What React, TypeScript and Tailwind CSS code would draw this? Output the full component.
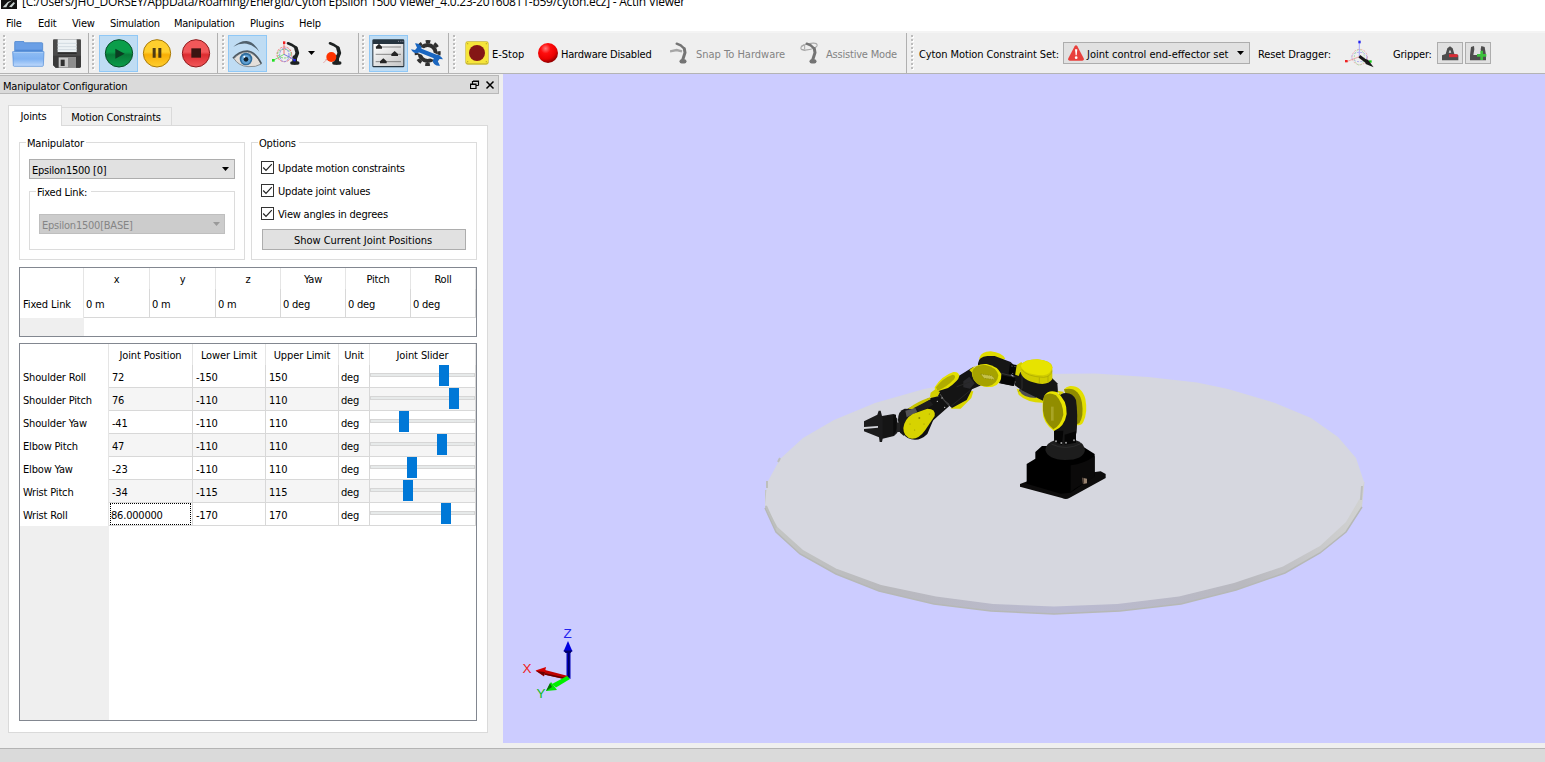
import type { ReactNode } from "react";

const JOINTS = [
  { name: "Shoulder Roll", pos: "72", lo: "-150", hi: "150", x: 69 },
  { name: "Shoulder Pitch", pos: "76", lo: "-110", hi: "110", x: 79 },
  { name: "Shoulder Yaw", pos: "-41", lo: "-110", hi: "110", x: 29 },
  { name: "Elbow Pitch", pos: "47", lo: "-110", hi: "110", x: 67 },
  { name: "Elbow Yaw", pos: "-23", lo: "-110", hi: "110", x: 37 },
  { name: "Wrist Pitch", pos: "-34", lo: "-115", hi: "115", x: 33 },
  { name: "Wrist Roll", pos: "86.000000", lo: "-170", hi: "170", x: 71 },
];

function Grip() {
  return (
    <svg className="h-9 w-[3px] shrink-0" viewBox="0 0 3 36">
      {[0, 1, 2, 3, 4, 5, 6, 7, 8].map((i) => (
        <g key={i}>
          <rect x="1" y={i * 4 + 1} width="2" height="2" fill="#fff" />
          <rect x="0" y={i * 4} width="2" height="2" fill="#bcbcbc" />
        </g>
      ))}
    </svg>
  );
}

function Sep() {
  return <div className="h-10 w-px shrink-0 bg-[#b0b0b0]" />;
}

function ToolButton({ active, children }: { active?: boolean; children: ReactNode }) {
  return (
    <button
      className={
        active
          ? "flex h-[37px] w-[39px] shrink-0 items-center justify-center border border-[#90c8f6] bg-[#bfdcf3]"
          : "flex h-[37px] w-[39px] shrink-0 items-center justify-center pr-[2px]"
      }
    >
      {children}
    </button>
  );
}

function FolderIcon() {
  return (
    <svg className="block h-[26px] w-[33px] shrink-0" viewBox="0 0 99 78">
      <defs>
        <linearGradient id="fold" x1="0" y1="0" x2="0" y2="1">
          <stop offset="0" stopColor="#8fbdf3" />
          <stop offset="0.5" stopColor="#7fb2f2" />
          <stop offset="1" stopColor="#c0dafc" />
        </linearGradient>
      </defs>
      <path d="M8 34V4q0-3 3-3h22q3 0 4 4h52q3 0 3 3v26z" fill="#6a9fe6" stroke="#3f7cc9" strokeWidth="2" />
      <path d="M10 26h80v8H10z" fill="#4f88d4" />
      <path d="M2 32h94l-2 41q0 3-3 3H7q-3 0-3-3z" fill="url(#fold)" stroke="#4a86d6" strokeWidth="2" />
      <path d="M4 34h90" stroke="#c3dcfa" strokeWidth="2" />
    </svg>
  );
}

function SaveIcon() {
  return (
    <svg className="block h-[29px] w-[28px] shrink-0" viewBox="0 0 84 87">
      <path d="M3 1h78q3 0 3 3v78q0 4-4 4H8l-8-8V4q0-3 3-3z" fill="#4a4a4a" />
      <path d="M0 50h84v32q0 4-4 4H8l-8-8z" fill="#3a3a3a" />
      <path d="M14 1h57v39H14z" fill="#edf2f5" />
      <path d="M14 13h57M14 23h57M14 32h57" stroke="#d2dbe1" strokeWidth="3" />
      <path d="M14 40h57v4H14z" fill="#222" />
      <path d="M17 55h52v31H17z" fill="#c9c9c9" />
      <path d="M45 55h24v31H45z" fill="#8d8d8d" />
      <path d="M23 62h12v19H23z" fill="#303030" />
    </svg>
  );
}

function RoundIcon({ kind }: { kind: "play" | "pause" | "stop" }) {
  const c = {
    play: ["#0b9e4a", "#087a38", "#064e24"],
    pause: ["#ffcf2e", "#f8ae05", "#a97a08"],
    stop: ["#f2585a", "#dc2c30", "#8e1a1c"],
  }[kind];
  return (
    <svg className="block size-[30px] shrink-0" viewBox="0 0 90 90">
      <defs>
        <linearGradient id={kind} x1="0" y1="0" x2="0" y2="1">
          <stop offset="0.45" stopColor={c[0]} />
          <stop offset="0.55" stopColor={c[1]} />
          <stop offset="1" stopColor={c[0]} />
        </linearGradient>
      </defs>
      <circle cx="45" cy="46" r="41" fill={"url(#" + kind + ")"} stroke={c[2]} strokeWidth="3" />
      {kind === "play" && <path d="M34 32v30l28-15z" fill="#0b3d22" />}
      {kind === "pause" && <path d="M32 30h9v29h-9zM49 30h9v29h-9z" fill="#4d3a13" />}
      {kind === "stop" && <path d="M31 31h29v28H31z" fill="#3c1412" />}
    </svg>
  );
}

function EyeIcon() {
  return (
    <svg className="mt-px block h-[28px] w-[31px] shrink-0" viewBox="0 0 93 84">
      <path d="M4 20Q24 2 44 3q20 1 38 32Q64 14 44 11 22 9 4 20z" fill="#50606c" />
      <path d="M6 56Q22 36 46 36q24 4 42 36-16 10-40 8Q20 78 6 56z" fill="#e4dfda" stroke="#8a9094" strokeWidth="3" />
      <path d="M3 55Q20 34 46 33q24 2 42 38" fill="none" stroke="#4e5860" strokeWidth="5" />
      <circle cx="42" cy="57" r="19" fill="#2f6c9c" />
      <circle cx="42" cy="58" r="14" fill="#5fa0d3" />
      <circle cx="42" cy="58" r="7" fill="#10202c" />
      <circle cx="37" cy="50" r="3" fill="#fff" />
    </svg>
  );
}

function Arm({ color }: { color: string }) {
  return (
    <g fill="none" stroke={color} strokeLinecap="round" strokeLinejoin="round">
      <path d="M48 7L60 12L72 20" strokeWidth="8" />
      <path d="M72 22L76 36L68 56" strokeWidth="11" />
      <path d="M60 66h17" strokeWidth="11" />
      <path d="M68 50v14" strokeWidth="14" />
    </g>
  );
}

function DraggerIcon() {
  return (
    <svg className="block h-[26px] w-[28px] shrink-0" viewBox="0 0 84 78">
      <Arm color="#1e2222" />
      <g fill="none" strokeWidth="3">
        <circle cx="37" cy="40" r="22" stroke="#ef7777" strokeDasharray="7 3" />
        <ellipse cx="37" cy="38" rx="20" ry="13" stroke="#79d779" strokeDasharray="7 3" />
        <ellipse cx="37" cy="42" rx="14" ry="20" stroke="#8888ee" strokeDasharray="7 3" />
        <path d="M36 40V5" stroke="#e77" />
        <path d="M36 40L4 58" stroke="#7d7" />
        <path d="M36 40l33 17" stroke="#77d" />
      </g>
      <path d="M33 1h7v8h-7z" fill="#f02020" />
      <path d="M0 54h8v8H0z" fill="#20e020" />
      <path d="M64 54h7v7h-7z" fill="#2020f0" />
    </svg>
  );
}

function BallArmIcon() {
  return (
    <svg className="block h-[26px] w-[28px] shrink-0" viewBox="0 0 84 78">
      <path d="M28 66l14-14M34 56h36" stroke="#d88" strokeWidth="2" />
      <Arm color="#1e2222" />
      <circle cx="52" cy="48" r="15" fill="#ff3300" />
    </svg>
  );
}

function SlidersIcon() {
  return (
    <svg className="block h-[29px] w-[33px] shrink-0" viewBox="0 0 99 87">
      <defs>
        <linearGradient id="sl" x1="0" y1="0" x2="1" y2="1">
          <stop offset="0" stopColor="#fff" />
          <stop offset="1" stopColor="#c6c6c6" />
        </linearGradient>
      </defs>
      <rect x="1" y="1" width="96" height="84" rx="4" fill="#26343f" />
      <path d="M4 15h90v66H4z" fill="url(#sl)" />
      <path d="M78 7h3M85 7h3M91 7h3" stroke="#889" strokeWidth="3" />
      <path d="M11 24h76M11 46h76M11 68h76" stroke="#555" strokeWidth="2" />
      <path d="M12 29v-6l9-9 9 9v6zM58 51v-6l10-9 10 9v6zM24 73v-6l10-9 10 9v6z" fill="#252525" />
    </svg>
  );
}

function GearIcon() {
  return (
    <svg className="block h-[27px] w-[33px] shrink-0" viewBox="0 0 99 81">
      <circle cx="50" cy="39" r="24" fill="none" stroke="#303030" strokeWidth="12" />
      <circle cx="50" cy="39" r="34" fill="none" stroke="#303030" strokeWidth="10" strokeDasharray="14 12.7" strokeDashoffset="7" />
      <path d="M20 28L80 54" stroke="#efefef" strokeWidth="20" />
      <path d="M18 28L84 54" stroke="#1a66c0" strokeWidth="13" />
      <path d="M12 10q14 0 20 12-2 14-14 18-12 0-18-12l12 2 6-7-6-13z" fill="#1a66c0" />
      <path d="M72 46q12-6 24 12l-10-1-6 6 7 14q-18 2-22-14z" fill="#1a66c0" />
    </svg>
  );
}

function EStopIcon() {
  return (
    <svg className="block size-6 shrink-0" viewBox="0 0 72 72">
      <rect x="1" y="1" width="70" height="70" rx="7" fill="#c9b936" />
      <rect x="3" y="3" width="66" height="64" rx="6" fill="#f6e53a" />
      <circle cx="36" cy="36" r="24" fill="#841616" />
      <g fill="#b7a62b"><circle cx="8" cy="8" r="2" /><circle cx="64" cy="8" r="2" /><circle cx="8" cy="62" r="2" /><circle cx="64" cy="62" r="2" /></g>
    </svg>
  );
}

function RedBall() {
  return (
    <svg className="block size-5 shrink-0" viewBox="0 0 60 60">
      <defs>
        <radialGradient id="ball" cx="0.38" cy="0.28" r="0.7">
          <stop offset="0" stopColor="#ff7a7a" />
          <stop offset="0.35" stopColor="#ff0d0d" />
          <stop offset="0.75" stopColor="#ea0000" />
          <stop offset="1" stopColor="#970000" />
        </radialGradient>
      </defs>
      <circle cx="30" cy="30" r="30" fill="url(#ball)" />
    </svg>
  );
}

function SnapIcon({ assist }: { assist?: boolean }) {
  return (
    <svg className="block h-[22px] w-[18px] shrink-0" viewBox="0 0 54 66">
      {assist ? (
        <g fill="none" stroke="#a8a8a8" strokeWidth="3">
          <ellipse cx="27" cy="14" rx="25" ry="9" transform="rotate(-12 27 14)" />
          <path d="M4 12l8-4M6 22l10 4M14 8v14" />
        </g>
      ) : (
        <path d="M0 28l20-4 16 4" fill="none" stroke="#a6a6a6" strokeWidth="7" />
      )}
      <g fill="none" stroke="#747474" strokeLinecap="round">
        <path d="M20 5l12 5 10 9" strokeWidth="7" />
        <path d="M43 20l2 12-7 22" strokeWidth="9" />
        <path d="M35 58h8" strokeWidth="13" />
      </g>
    </svg>
  );
}

function WarnIcon() {
  return (
    <svg className="block size-4 shrink-0" viewBox="0 0 48 48">
      <path d="M20 4q4-6 8 0l19 36q2 7-4 7H5q-6 0-4-7z" fill="#e8403c" />
      <path d="M21 13h7l-2 18h-3z" fill="#fff" />
      <circle cx="24.500" cy="38" r="4" fill="#fff" />
    </svg>
  );
}

function ResetIcon() {
  return (
    <svg className="mt-px block h-[28px] w-[30px] shrink-0" viewBox="0 0 90 84">
      <g fill="none" strokeWidth="2.500">
        <circle cx="44" cy="51" r="23" stroke="#f0a0a0" strokeDasharray="6 4" />
        <ellipse cx="43" cy="51" rx="23" ry="14" stroke="#a0a0f0" strokeDasharray="6 4" />
        <ellipse cx="43" cy="52" rx="15" ry="23" stroke="#a0e0a0" strokeDasharray="6 4" />
        <path d="M43 50V6" stroke="#99f" />
        <path d="M43 50L5 65" stroke="#e99" />
        <path d="M43 50l33 17" stroke="#7c7" />
      </g>
      <path d="M40 2h7v8h-7z" fill="#22e" />
      <path d="M0 60h8v7H0z" fill="#e22" />
      <path d="M72 61h8v7h-8z" fill="#1c1" />
      <path d="M43 49l22 16" stroke="#181818" strokeWidth="9" />
      <path d="M60 57l9 2 17 23-24-10z" fill="#181818" />
    </svg>
  );
}

function GripperIcon({ open }: { open?: boolean }) {
  return (
    <svg className="block h-[18px] w-[18px] shrink-0" viewBox="0 0 54 54">
      {open ? (
        <path d="M3 49V33l3-24 9-3 1 10-3 17h25l-3-17 2-10 10 3 4 24v16z" fill="#4d4d4d" />
      ) : (
        <path d="M3 49V34l11-4 5-17 8-6 8 6 5 17 12 4v15z" fill="#4d4d4d" />
      )}
      {open ? (
        <path d="M24 34h28M38 20v28" stroke="#3dc03d" strokeWidth="8" />
      ) : (
        <>
          <path d="M27 17l4 9h-8z" fill="#e1e1e1" />
          <path d="M24 35h26" stroke="#d92c35" strokeWidth="9" />
        </>
      )}
    </svg>
  );
}

function Caret({ dim }: { dim?: boolean }) {
  return (
    <svg className="block h-1 w-[7px] shrink-0" viewBox="0 0 7 4">
      <path d="M0 0h7L3.5 4z" fill={dim ? "#9a9a9a" : "#000"} />
    </svg>
  );
}

function Group({ title, titleClass, className, children }: { title: string; titleClass: string; className: string; children: ReactNode }) {
  return (
    <section className={"relative border border-[#dcdcdc] " + className}>
      <span className={"absolute -top-[7px] left-[6px] h-4 bg-white pl-px leading-4 " + titleClass}>{title}</span>
      {children}
    </section>
  );
}

function Check({ label }: { label: string }) {
  return (
    <label className="flex h-[23px] items-center gap-1">
      <svg className="block size-[13px]" viewBox="0 0 13 13">
        <rect x="0.5" y="0.5" width="12" height="12" fill="#fff" stroke="#333" />
        <path d="M2.2 6.5L5 9.3L10.8 3.2" fill="none" stroke="#222" strokeWidth="1.2" />
      </svg>
      <span className="pt-[3px]">{label}</span>
    </label>
  );
}

function Robot() {
  return (
    <g transform="translate(850 340) scale(0.33333)">
      {/* base */}
      <path d="M510 432l22-8 220-30 15 8v12L658 474q-10 6-22 0L510 440z" fill="#0d0c0c" />
      <path d="M530 372l26-16v-20l20-18h120l38 24v66l-72 50-30 3-102-30z" fill="#000" />
      <path d="M662 376q40-4 72-28v62l-60 36-12 10z" fill="#0b0a0a" />
      <path d="M586 330q2-22 30-30h60q24 6 29 30-4 30-60 30-52-2-59-30z" fill="#1d1d1d" />
      <path d="M604 312q44 22 90-2" fill="none" stroke="#333" strokeWidth="2" />
      <path d="M697 413l14 3v14l-12 2z" fill="#97826f" />
      <path d="M697 413l5 1v17l-3 1z" fill="#4f4036" />
      {/* shoulder */}
      <path d="M642 148q6-8 18-10 34-2 46 38 8 40-6 70-8 14-24 8z" fill="#e3df00" />
      <path d="M642 148q44-10 54 40 6 40-8 62l-12 4z" fill="#8f8b00" />
      <path d="M612 170q50-26 66 10 6 40 2 96l-8 30-52 8-8-14z" fill="#161616" />
      <path d="M612 272h28l-4 44-22-12zM644 284l34-10v34l-34 6z" fill="#050505" />
      <g fill="#999"><circle cx="618" cy="304" r="3" /><circle cx="634" cy="309" r="3" /><circle cx="648" cy="308" r="3" /><circle cx="672" cy="301" r="3" /></g>
      <path d="M500 146l80 22 4 20q-50 2-78-24z" fill="#ddd900" />
      <path d="M508 146h46l4 28q-38 0-50-22z" fill="#4e4e52" />
      <path d="M488 92l112 16 22 22 2 26-42 28-64-32-24-16z" fill="#151515" />
      <path d="M516 104v42l-10 8" fill="none" stroke="#3a3a3a" strokeWidth="2" />
      <path d="M622 152l20 4-12 10z" fill="#d7d300" />
      <path d="M584 166q12-18 36-10 32 24 30 66-6 38-38 51-34-24-34-60-2-30 6-47z" fill="#e7e300" />
      <path d="M582 168q14-14 36-2 22 24 22 58-8 32-30 44-28-24-31-56-1-26 3-44z" fill="#918d00" />
      <path d="M603 200h8v42h-8z" fill="#a8a424" />
      <path d="M492 80l22-14 6 8-14 34-16-6z" fill="#d2ce00" />
      <path d="M512 76q10-18 50-18 42 4 45 22v38q-10 14-30 14-56-6-65-34z" fill="#d0cc00" />
      <path d="M512 76q12-18 50-18 42 4 45 24-4 22-28 24-62-2-67-30z" fill="#e7e300" />
      <path d="M515 88q14 22 66 24 22-2 25-20M568 112v18M594 108v20" fill="none" stroke="#a8a400" strokeWidth="2" />
      {/* elbow */}
      <path d="M388 54q6-20 34-20 34 4 44 22l-20 8-58-4z" fill="#e0dc00" />
      <path d="M384 70q2-20 28-22h22l48 18 10 10-10 30 16 10-8 22-42-8-20-30-44-22z" fill="#161616" />
      <path d="M454 106l42 8-4 24-40-8z" fill="#060606" />
      <path d="M454 100l42 10" stroke="#444" strokeWidth="2" />
      <path d="M480 72l20 3-5 32-19-6z" fill="#050505" />
      <path d="M484 78l14 2M494 126h8M486 100l8 2" stroke="#888" strokeWidth="2" strokeDasharray="4 5" />
      <path d="M350 152l20 2-6 20-32 32-30 0z" fill="#dad600" />
      <path d="M326 108l42-26 26 54-28 12-16 32-44 24-46-40 6-26z" fill="#141414" />
      <path d="M340 124l18-14 16 20-14 16-20-4z" fill="#29292c" />
      <path d="M270 162q12 22 28 32" fill="none" stroke="#6d6d6d" strokeWidth="2" />
      <path d="M320 140l40-14M304 198l56-46" stroke="#262626" strokeWidth="3" fill="none" />
      <path d="M358 90l16-12-4 24z" fill="#d4d000" />
      <path d="M366 94q10-24 44-22 32 6 44 30 2 30-26 38-34 6-54-18-10-14-8-28z" fill="#e4e000" />
      <path d="M367 94q8-22 40-19 32 6 38 31-2 26-30 33-30 2-44-20-6-10-4-25z" fill="#a6a200" />
      <path d="M392 102l34 5 10 12-34-4z" fill="#c5c14a" stroke="#85820a" strokeWidth="2" strokeDasharray="4 3" />
      <path d="M254 142q20-34 56-46 16-2 18 12-2 14-34 36l-38 12z" fill="#e3df00" />
      <path d="M258 142q20-28 50-38 12 2 4 14-24 26-50 34z" fill="#b0ac00" />
      <path d="M242 158l14-10 14 8-8 16 4 14-18-4-8-12z" fill="#d4d000" />
      {/* wrist */}
      <path d="M232 176l36-8 30 30-34 30-46 42-52-60z" fill="#121212" />
      <path d="M174 206q26-20 66-34l2 6-56 34z" fill="#c8c400" />
      <path d="M190 205l48-25 12 14-38 22z" fill="#1e1e1f" />
      <path d="M144 240q0-28 20-34l40 2-8 22-34 58-12-10z" fill="#171717" />
      <path d="M166 212l30-8 6 12-32 16z" fill="#545456" />
      <path d="M158 268q4-30 32-46l46-16q24 0 20 20l-24 56q-22 22-48 16-26-6-26-30z" fill="#101010" />
      <path d="M160 264q4-28 28-42l44-16q26 0 22 22l-28 42q-18 26-40 26-26-4-26-32z" fill="#d7d300" />
      <g fill="#8c8900"><circle cx="208" cy="234" r="3" /><circle cx="180" cy="252" r="1.500" /><circle cx="222" cy="252" r="1.500" /><circle cx="194" cy="270" r="1.500" /><circle cx="238" cy="222" r="1.500" /></g>
      <g fill="#ccc"><circle cx="262" cy="184" r="2" /><circle cx="276" cy="174" r="2" /><circle cx="284" cy="202" r="2" /></g>
      {/* gripper */}
      <path d="M42 244l40-20 4-12h6l4 16 34-6 12 14v42l-10 10-34 8-2 10h-7l-2-14-45-18z" fill="#1b1b1c" />
      <path d="M98 230l34-4v60l-34 8z" fill="#151515" />
      <path d="M130 222l8 2v14l6 16-6 20-8 12z" fill="#0b0b0b" />
      <path d="M140 248h10v28h-10z" fill="#222" />
      <path d="M42 261l42-3v5l-42 4z" fill="#d5d6dc" />
    </g>
  );
}

function Scene() {
  return (
    <svg className="block h-[669px] w-[1042px] shrink-0 bg-[#ccccff]" viewBox="503 74 1042 669">
      <defs>
        <linearGradient id="rim" x1="0" x2="1" y1="0" y2="0">
          <stop offset="0" stopColor="#c4c6c4" />
          <stop offset="0.2" stopColor="#b9b9bd" />
          <stop offset="0.5" stopColor="#babad2" />
          <stop offset="0.8" stopColor="#b9b9bf" />
          <stop offset="1" stopColor="#d2d3d2" />
        </linearGradient>
      </defs>
      <path d="M765 490V508L776 532L800 554L836 574L879 591L934 604L991 611L1054 614L1120 611L1181 604L1236 590L1285 573L1320 553L1346 532L1362 507L1364.500 482L1300 470z" fill="url(#rim)" />
      <path d="M765 508L776 532L800 554L836 574L879 591L934 604L991 611L1054 614L1120 611L1181 604L1236 590L1285 573L1320 553L1346 532L1362 507" fill="none" stroke="#b6b8b6" strokeWidth="1.500" />
      <path d="M765 505L777.500 527L803 550L836 568.500L881 585L936 596.500L993 604L1054 606.500L1117.500 604L1179 596.500L1234 583L1283 566.500L1320 546L1346 522L1360 498L1364 482L1356 458L1338 437L1311 418L1275 403L1228 389L1197 382.500L1148 377L1095 373.500L1040 374L982 378.500L924 389L875 403L834 420L803 438L780 459L767 483z" fill="#d6d7df" />
      <path d="M767 481v7M780 458l-2 4M766 506l10 22M1362 486l-1 14" stroke="#bdbfbd" strokeWidth="2" fill="none" />
      <Robot />
      <g>
        <path d="M566.500 677V651h4V679z" fill="#0000b8" />
        <path d="M568.700 651v26" stroke="#000060" strokeWidth="1.500" />
        <path d="M568 641l4.500 10.500h-9z" fill="#0000e0" />
        <path d="M563.500 650.500h9l-2 2.500h-5z" fill="#00006b" />
        <path d="M545 670l23 6v4l-24-5.500z" fill="#c00000" />
        <path d="M545 674l23 5" stroke="#600000" strokeWidth="1.500" />
        <path d="M535.500 670.500l10.500-3.500-2 9.500z" fill="#d40000" />
        <path d="M536 671l8 5 1-4z" fill="#6b0000" />
        <path d="M567 676l3 3-14 8.500-4-3.500z" fill="#00f000" />
        <path d="M546 691l5-9 6 8z" fill="#00e800" />
        <path d="M546 691l4-8 2 4z" fill="#067006" />
        <g fontFamily="Liberation Sans, sans-serif" fontSize="13.500">
          <text x="563.500" y="637.500" fill="#2222ee">Z</text>
          <text x="522.500" y="673" fill="#ee2222">X</text>
          <text x="536.500" y="697.500" fill="#11bb22">Y</text>
        </g>
      </g>
    </svg>
  );
}

function FixedLinkTable() {
  const cols = [
    ["x", "0 m", "w-[66px]"],
    ["y", "0 m", "w-[66px]"],
    ["z", "0 m", "w-[65px]"],
    ["Yaw", "0 deg", "w-[65px]"],
    ["Pitch", "0 deg", "w-[65px]"],
    ["Roll", "0 deg", "w-[65px]"],
  ];
  return (
    <div className="mt-[7px] flex h-[70px] w-[458px] border border-[#828790]">
      <div className="flex w-16 flex-col">
        <div className="h-[21px] border-r border-[#e5e5e5]" />
        <div className="h-[29px] border-r border-[#e5e5e5] pl-[3px] leading-[31px] tracking-[-0.1px]">Fixed Link</div>
        <div className="flex-1 bg-[#efefef]" />
      </div>
      {cols.map(([h, v, w]) => (
        <div key={h} className={w}>
          <div className="h-[21px] border-r border-[#e5e5e5] text-center leading-[23px]">{h}</div>
          <div className="h-[29px] border-r border-b border-[#d8d8d8] pl-[2px] leading-[31px]">{v}</div>
        </div>
      ))}
    </div>
  );
}

function JointTable() {
  return (
    <div className="mt-[6px] flex h-[378px] w-[458px] flex-col border border-[#828790]">
      <div className="flex h-[21px] text-center leading-6 tracking-[-0.1px]">
        <div className="w-[89px] border-r border-[#e5e5e5]" />
        <div className="w-[84px] border-r border-[#e5e5e5]">Joint Position</div>
        <div className="w-[73px] border-r border-[#e5e5e5]">Lower Limit</div>
        <div className="w-[73px] border-r border-[#e5e5e5]">Upper Limit</div>
        <div className="w-[31px] border-r border-[#e5e5e5]">Unit</div>
        <div className="w-[106px] border-r border-[#e5e5e5]">Joint Slider</div>
      </div>
      {JOINTS.map((j, i) => (
        <div key={j.name} className="flex h-[23px] leading-[26px]">
          <div className="h-[23px] w-[89px] border-r border-[#e5e5e5] pl-[3px] tracking-[-0.17px]">{j.name}</div>
          <div className={"flex h-[23px] w-[367px] border-b border-[#d8d8d8] " + (i % 2 ? "bg-[#f5f5f5]" : "bg-white")}>
            {i === 6 ? (
              <div className="w-[84px] border-r border-[#d8d8d8] pl-px">
                <div className="h-[22px] w-[81px] border border-dotted border-black leading-6">{j.pos}</div>
              </div>
            ) : (
              <div className="w-[84px] border-r border-[#d8d8d8] pl-[3px]">{j.pos}</div>
            )}
            <div className="w-[73px] border-r border-[#d8d8d8] pl-[3px]">{j.lo}</div>
            <div className="w-[73px] border-r border-[#d8d8d8] pl-[3px]">{j.hi}</div>
            <div className="w-[31px] border-r border-[#d8d8d8] pl-[2px]">deg</div>
            <div className="w-[106px] border-r border-[#d8d8d8] pt-2">
              <div className="h-1 w-[105px] border border-[#d6d6d6] bg-[#e7eaea]">
                <div className="relative -top-[9px] h-[21px] w-[10px] bg-[#0078d7]" style={{ left: j.x - 1 }} />
              </div>
            </div>
          </div>
        </div>
      ))}
      <div className="w-[89px] flex-1 bg-[#efefef]" />
    </div>
  );
}

function Dock() {
  return (
    <aside className="w-[503px] shrink-0 text-black">
      <div className="mt-px flex h-[19px] w-[499px] items-center border border-l-0 border-[#b8b8b8] bg-[#dadada] pl-[3px]">
        <span className="flex-1 pt-[5px] tracking-[-0.2px]">Manipulator Configuration</span>
        <svg className="block h-[10px] w-[28px]" viewBox="0 0 28 10" fill="none" stroke="#000">
          <path d="M3 1h5.500v4.500M3 1.500h5.500M2.500 4V1M8.500 5.500h-2M0.500 4h5.500v4.500h-5.500zM0.500 4.500h5.500" strokeWidth="1.200" />
          <path d="M16.500 1.500l7 7M23.500 1.500l-7 7" strokeWidth="1.500" />
        </svg>
      </div>
      <div className="ml-2 mt-[11px] flex h-5 items-end">
        <div className="relative z-10 -mb-px flex h-[21px] w-[54px] items-center justify-center self-end border border-b-0 border-[#dadada] bg-white pt-[2px] pr-[3px]">
          Joints
        </div>
        <div className="-ml-px flex h-[18px] w-[111px] items-center justify-center border border-b-0 border-[#dadada] bg-[#f0f0f0] pt-[3px] pr-px">
          Motion Constraints
        </div>
      </div>
      <div className="ml-2 h-[608px] w-[480px] border border-[#dadada] bg-white pl-[10px] pt-4">
        <div className="flex gap-[6px]">
          <Group title="Manipulator" titleClass="w-[60px]" className="h-[118px] w-[226px] px-[9px] pt-4">
            <div className="flex h-5 items-center justify-between border border-[#adadad] bg-[#e1e1e1] pl-[2px] pr-[5px]">
              <span className="pt-1 tracking-[-0.23px]">Epsilon1500 [0]</span>
              <Caret />
            </div>
            <Group title="Fixed Link:" titleClass="w-[55px]" className="mt-3 h-[59px] w-[206px] px-[9px] pt-[22px]">
              <div className="flex h-5 items-center justify-between border border-[#bfbfbf] bg-[#cccccc] pl-[2px] pr-1 text-[#858585]">
                <span className="pt-1 tracking-[-0.23px]">Epsilon1500[BASE]</span>
                <Caret dim />
              </div>
            </Group>
          </Group>
          <Group title="Options" titleClass="w-[41px]" className="h-[118px] w-[226px] px-[9px] pt-[13px]">
            <Check label="Update motion constraints" />
            <Check label="Update joint values" />
            <Check label="View angles in degrees" />
            <button className="ml-px mt-[4px] block h-[21px] w-[204px] border border-[#adadad] bg-[#e1e1e1] pr-[2px] leading-[22px] tracking-[-0.02px]">
              Show Current Joint Positions
            </button>
          </Group>
        </div>
        <FixedLinkTable />
        <JointTable />
      </div>
    </aside>
  );
}

export default function App() {
  return (
    <div className="flex h-[762px] w-[1545px] flex-col overflow-hidden bg-[#efefef] font-['DejaVu_Sans_Condensed','DejaVu_Sans',sans-serif] text-[11px] tracking-[-0.2px] whitespace-nowrap text-black [font-stretch:condensed]">
      <header className="flex h-[14px] shrink-0 items-start bg-white">
        <svg className="ml-px block h-[9px] w-4" viewBox="0 0 48 27">
          <path d="M0 0h48v27H0z" fill="#111" />
          <path d="M5 22L20 6l14-5-12 9-6 12zM24 20l14-14 4 4-10 12z" fill="#c9d2d0" />
        </svg>
        <span className="-mt-[6px] ml-[5px] font-['Open_Sans',sans-serif] text-[12px] leading-4 tracking-[-0.27px] [font-stretch:normal]">
          [C:/Users/JHU_DORSEY/AppData/Roaming/Energid/Cyton Epsilon 1500 Viewer_4.0.23-20160811-b59/cyton.ecz] - Actin Viewer
        </span>
      </header>
      <nav className="flex h-[17px] shrink-0 items-center bg-white pl-[6px] pt-[3px]">
        <span className="w-8">File</span>
        <span className="w-[34px]">Edit</span>
        <span className="w-[38px]">View</span>
        <span className="w-16 tracking-[-0.3px]">Simulation</span>
        <span className="w-[76px] tracking-[-0.3px]">Manipulation</span>
        <span className="w-[49px]">Plugins</span>
        <span>Help</span>
      </nav>
      <div className="flex h-[43px] shrink-0 items-center border-b border-b-[#b4b4b4] border-t-2 border-t-[#f4f4f4]">
        <div className="flex w-[88px] items-center pl-[3px]">
          <Grip />
          <div className="ml-[6px] pt-[2px]"><FolderIcon /></div>
          <div className="ml-2"><SaveIcon /></div>
        </div>
        <Sep />
        <div className="flex w-[128px] items-center pl-[3px]">
          <Grip />
          <div className="ml-1 flex">
            <ToolButton active><RoundIcon kind="play" /></ToolButton>
            <ToolButton><RoundIcon kind="pause" /></ToolButton>
            <ToolButton><RoundIcon kind="stop" /></ToolButton>
          </div>
        </div>
        <Sep />
        <div className="flex w-[140px] items-center pl-[4px]">
          <Grip />
          <div className="ml-[3px]"><ToolButton active><EyeIcon /></ToolButton></div>
          <div className="ml-[5px] pt-[2px]"><DraggerIcon /></div>
          <div className="ml-2"><Caret /></div>
          <div className="-ml-px pt-[2px]"><BallArmIcon /></div>
        </div>
        <Sep />
        <div className="flex w-[89px] items-center pl-[3px]">
          <Grip />
          <div className="ml-1"><ToolButton active><SlidersIcon /></ToolButton></div>
          <div className="ml-[3px]"><GearIcon /></div>
        </div>
        <Sep />
        <div className="flex w-[457px] items-center pl-1">
          <Grip />
          <div className="ml-[9px]"><EStopIcon /></div>
          <span className="ml-[3px] w-[46px] pt-[5px] tracking-[0px]">E-Stop</span>
          <RedBall />
          <span className="ml-[3px] w-[109px] pt-[5px]">Hardware Disabled</span>
          <SnapIcon />
          <span className="ml-2 w-[104px] pt-[5px] tracking-[0px] text-[#838383]">Snap To Hardware</span>
          <SnapIcon assist />
          <span className="ml-2 pt-[5px] text-[#838383]">Assistive Mode</span>
        </div>
        <Sep />
        <div className="flex items-center pl-1">
          <Grip />
          <span className="ml-[5px] w-[144px] pt-[5px] tracking-[-0.1px]">Cyton Motion Constraint Set:</span>
          <div className="flex h-[22px] w-[187px] items-center border border-[#adadad] bg-[#e1e1e1] pl-1">
            <WarnIcon />
            <span className="ml-[3px] flex-1 pt-[5px] tracking-[0px]">Joint control end-effector set</span>
            <div className="pr-[5px]"><Caret /></div>
          </div>
          <span className="ml-2 w-[87px] pt-[5px] tracking-[-0.1px]">Reset Dragger:</span>
          <ResetIcon />
          <span className="ml-[18px] w-11 pt-[5px]">Gripper:</span>
          <div className="flex h-[22px] w-[26px] items-center justify-center border border-[#adadad] bg-[#e1e1e1]"><GripperIcon /></div>
          <div className="ml-[2px] flex h-[22px] w-[26px] items-center justify-center border border-[#adadad] bg-[#e1e1e1]"><GripperIcon open /></div>
        </div>
      </div>
      <main className="flex h-[674px] shrink-0">
        <Dock />
        <Scene />
      </main>
      <footer className="h-[14px] shrink-0 border-t border-[#b4b4b4] bg-[#dadada]" />
    </div>
  );
}
